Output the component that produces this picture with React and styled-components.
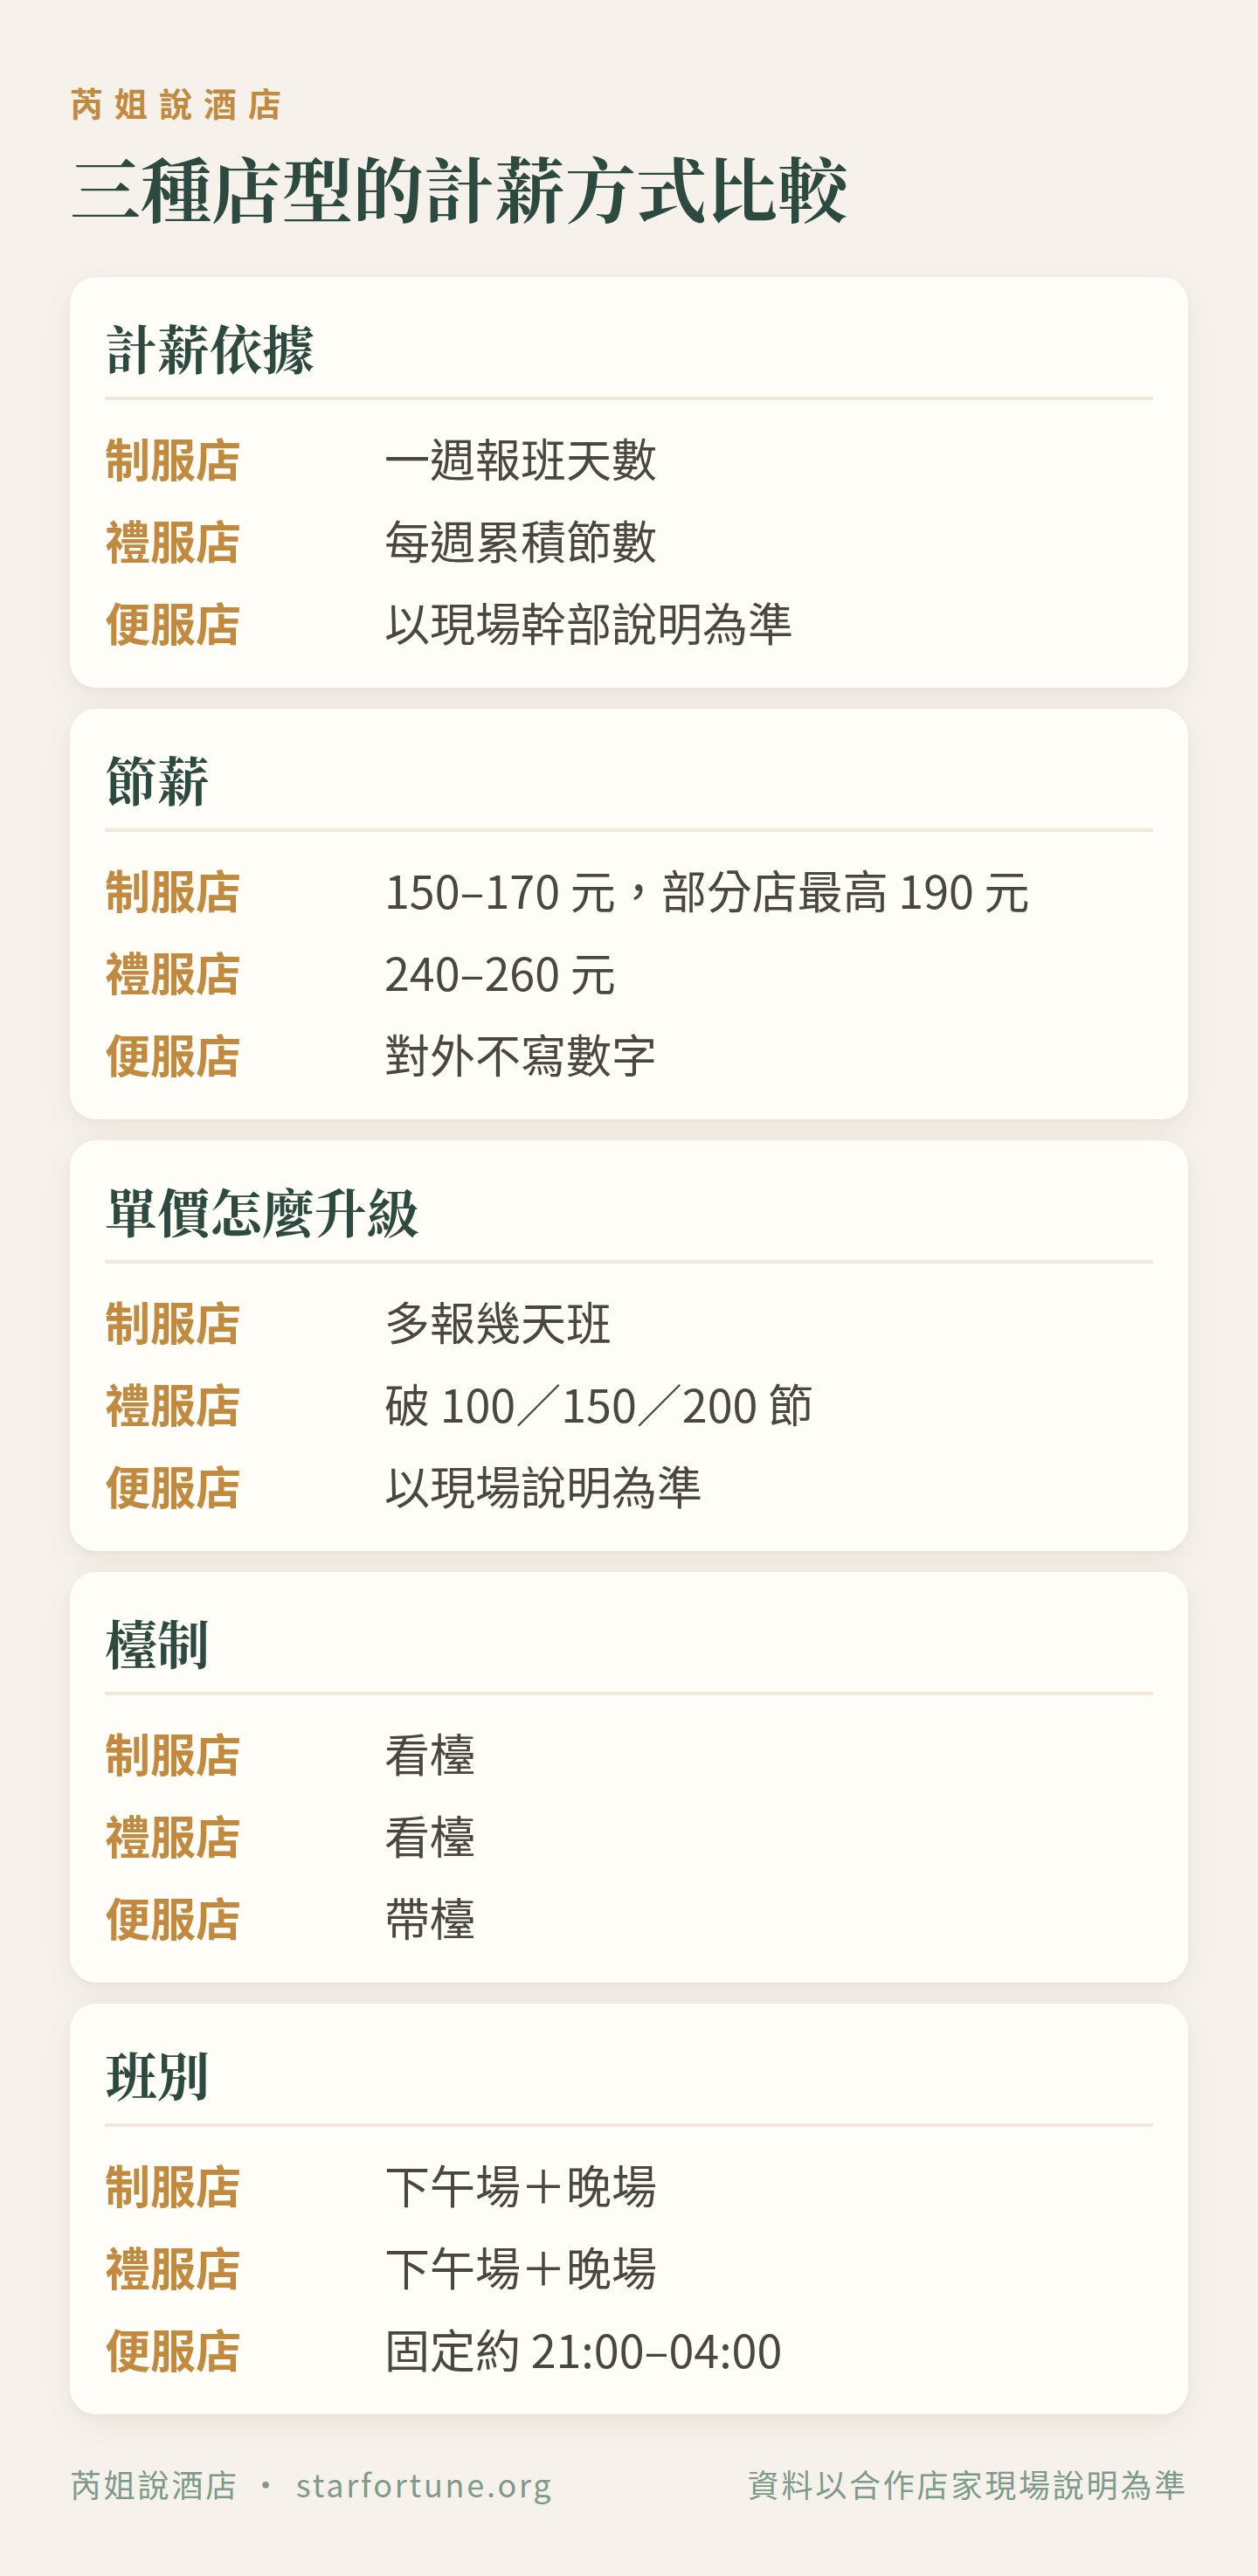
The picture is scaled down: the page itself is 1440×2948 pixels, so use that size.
import React from "react";
import styled, { createGlobalStyle } from "styled-components";

const GlobalStyle = createGlobalStyle`
  html, body {
    margin: 0;
    padding: 0;
    background: #f6f2eb;
  }
  body {
    font-family: "Noto Sans CJK TC", "Noto Sans", sans-serif;
    -webkit-font-smoothing: antialiased;
  }
  * { box-sizing: border-box; }
`;

const Page = styled.main`
  width: 1440px;
  min-height: 2948px;
  padding: 93px 80px 82px;
  background: #f6f2eb;
  display: flex;
  flex-direction: column;
`;

const Eyebrow = styled.div`
  font-family: "Noto Sans CJK TC", sans-serif;
  font-weight: 700;
  font-size: 38px;
  line-height: 48px;
  letter-spacing: 13px;
  color: #c28a3e;
`;

const Headline = styled.h1`
  margin: 22px 0 0;
  font-family: "Noto Serif CJK TC", "Noto Serif TC", "Source Han Serif TC", "Noto Sans CJK TC", serif;
  font-weight: 700;
  font-size: 81px;
  line-height: 100px;
  color: #2d4a41;
`;

const CardList = styled.section`
  margin-top: 54px;
  display: flex;
  flex-direction: column;
  gap: 24px;
`;

const Card = styled.article`
  background: #fefdf8;
  border-radius: 30px;
  padding: 40px 40px 28px;
  box-shadow: 0 12px 34px rgba(90, 70, 40, 0.08), 0 2px 6px rgba(90, 70, 40, 0.03);
`;

const CardTitle = styled.h2`
  margin: 0;
  padding-bottom: 17px;
  border-bottom: 4px solid #eee7da;
  font-family: "Noto Serif CJK TC", "Noto Serif TC", "Source Han Serif TC", "Noto Sans CJK TC", serif;
  font-weight: 700;
  font-size: 60px;
  line-height: 80px;
  color: #2d4a41;
`;

const Rows = styled.dl`
  margin: 19px 0 0;
  display: grid;
  grid-template-columns: 320px 1fr;
  grid-auto-rows: 94px;
  align-items: center;
`;

const Label = styled.dt`
  font-family: "Noto Sans CJK TC", sans-serif;
  font-weight: 700;
  font-size: 52px;
  line-height: 94px;
  color: #c28a3e;
`;

const Value = styled.dd`
  margin: 0;
  font-family: "Noto Sans CJK TC", sans-serif;
  font-weight: 400;
  font-size: 52px;
  line-height: 94px;
  color: #4a4741;
`;

const Footer = styled.footer`
  margin-top: 55px;
  display: flex;
  justify-content: space-between;
  align-items: center;
  font-family: "Noto Sans CJK TC", sans-serif;
  font-size: 36px;
  line-height: 48px;
  color: #7d9a8b;
`;

const FooterText = styled.span`
  letter-spacing: 2.8px;
  white-space: nowrap;
`;

const Dot = styled.span`
  display: inline-block;
  margin: 0 14px 0 12px;
`;

const sections = [
  {
    title: "計薪依據",
    rows: [
      ["制服店", "一週報班天數"],
      ["禮服店", "每週累積節數"],
      ["便服店", "以現場幹部說明為準"],
    ],
  },
  {
    title: "節薪",
    rows: [
      ["制服店", "150–170 元，部分店最高 190 元"],
      ["禮服店", "240–260 元"],
      ["便服店", "對外不寫數字"],
    ],
  },
  {
    title: "單價怎麼升級",
    rows: [
      ["制服店", "多報幾天班"],
      ["禮服店", "破 100／150／200 節"],
      ["便服店", "以現場說明為準"],
    ],
  },
  {
    title: "檯制",
    rows: [
      ["制服店", "看檯"],
      ["禮服店", "看檯"],
      ["便服店", "帶檯"],
    ],
  },
  {
    title: "班別",
    rows: [
      ["制服店", "下午場＋晚場"],
      ["禮服店", "下午場＋晚場"],
      ["便服店", "固定約 21:00–04:00"],
    ],
  },
];

export default function App() {
  return (
    <>
      <GlobalStyle />
      <Page>
        <Eyebrow>芮姐說酒店</Eyebrow>
        <Headline>三種店型的計薪方式比較</Headline>
        <CardList>
          {sections.map((s) => (
            <Card key={s.title}>
              <CardTitle>{s.title}</CardTitle>
              <Rows>
                {s.rows.map(([label, value]) => (
                  <React.Fragment key={label}>
                    <Label>{label}</Label>
                    <Value>{value}</Value>
                  </React.Fragment>
                ))}
              </Rows>
            </Card>
          ))}
        </CardList>
        <Footer>
          <FooterText>
            芮姐說酒店<Dot>・</Dot>starfortune.org
          </FooterText>
          <FooterText>資料以合作店家現場說明為準</FooterText>
        </Footer>
      </Page>
    </>
  );
}
